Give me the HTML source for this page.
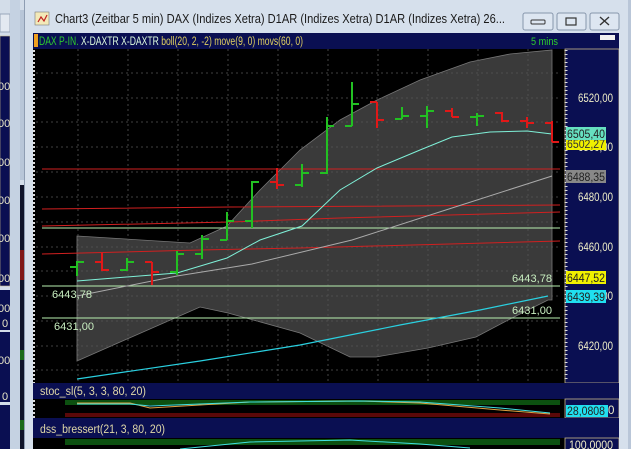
<!DOCTYPE html>
<html><head><meta charset="utf-8"><style>
body{margin:0;width:631px;height:449px;overflow:hidden;background:#d3dde9;font-family:"Liberation Sans",sans-serif}
svg{display:block}
text{font-family:"Liberation Sans",sans-serif}
</style></head><body>
<svg width="631" height="449" viewBox="0 0 631 449" xmlns="http://www.w3.org/2000/svg">
<rect x="0" y="0" width="631" height="449" fill="#d3dde9"/>
<!-- left window -->
<rect x="0" y="14" width="10" height="18" fill="#e3e9f1" stroke="#9aa8ba"/>
<rect x="0" y="36" width="10" height="250" fill="#0a0f52" stroke="#c9b98a" stroke-width="0.6"/>
<rect x="0" y="290" width="10" height="40" fill="#0a0f52"/>
<rect x="0" y="332" width="10" height="70" fill="#0a0f52"/>
<rect x="0" y="405" width="10" height="44" fill="#0a0f52"/>
<g fill="#e8e6c8" font-size="11">
<text x="-2" y="90">00</text><text x="-2" y="127">00</text><text x="-2" y="166">00</text><text x="-2" y="204">00</text><text x="-2" y="242">00</text><text x="-2" y="282">00</text><text x="-2" y="312">00</text><text x="2" y="327">0</text><text x="-2" y="364">00</text><text x="2" y="400">0</text>
</g>
<rect x="10" y="0" width="10" height="449" fill="#c5d2e2"/>
<rect x="20" y="185" width="4" height="264" fill="#10142a"/>
<rect x="20" y="250" width="4" height="30" fill="#801818"/>
<rect x="20" y="350" width="4" height="10" fill="#1a6a1a"/>
<rect x="20" y="420" width="4" height="10" fill="#1a6a1a"/>
<rect x="20" y="10" width="4" height="170" fill="#b8c6d8"/>
<!-- main window frame -->
<rect x="24" y="0" width="607" height="449" fill="#d6e0ec"/>
<rect x="24" y="0" width="1" height="449" fill="#8e9db2"/>
<text x="55" y="23" font-size="12.5" fill="#1a1a1a" textLength="450" lengthAdjust="spacingAndGlyphs">Chart3 (Zeitbar 5 min)  DAX (Indizes Xetra) D1AR (Indizes Xetra) D1AR (Indizes Xetra) 26...</text>
<rect x="35" y="12" width="14" height="13" fill="#f3e9b8" stroke="#7a7a7a" stroke-width="0.6"/>
<path d="M38 22 l3 -5 l3 4 l3 -6" stroke="#c02020" fill="none" stroke-width="1.2"/>
<g fill="#dde6f1" stroke="#8797ac">
<rect x="523" y="13" width="30" height="17" rx="2"/><rect x="557" y="13" width="29" height="17" rx="2"/><rect x="590" y="13" width="29" height="17" rx="2"/>
</g>
<rect x="531" y="20" width="14" height="4" fill="none" stroke="#333" rx="1"/>
<rect x="566" y="18" width="10" height="7" fill="none" stroke="#333" stroke-width="1.2"/>
<path d="M600 17 l9 8 M609 17 l-9 8" stroke="#333" stroke-width="1.4"/>
<!-- header bar -->
<rect x="33" y="33" width="586" height="16" fill="#0a0f52"/>
<rect x="34" y="34" width="4" height="13" fill="#f0a020"/>
<text x="39" y="45" font-size="11.5" textLength="264" lengthAdjust="spacingAndGlyphs"><tspan fill="#2ecc2e">DAX P-IN.</tspan><tspan fill="#e0ffe0"> X-DAXTR X-DAXTR</tspan><tspan fill="#e0d060"> boll(20, 2, -2) move(9, 0) movs(60, 0)</tspan></text>
<text x="531" y="45" font-size="11" fill="#2ecc2e" textLength="27" lengthAdjust="spacingAndGlyphs">5 mins</text>
<rect x="600" y="35" width="15" height="5" fill="#f0f0f0"/>
<!-- chart area -->
<rect x="33" y="49" width="532" height="334" fill="#000"/>
<path d="M77 236 L190 243 L227 226 L260 190 L300 150 L340 120 L377 100 L420 80 L470 62 L510 54 L552 50 L552 300 L548 300 L512 318 L476 337 L428 348 L376 357 L350 357 L300 333 L228 313 L200 307 L77 361 Z" fill="#3a3a3a" stroke="#777" stroke-width="0.8"/>
<g stroke="#555" stroke-dasharray="2,3" stroke-width="0.8">
<line x1="78" y1="49" x2="78" y2="383"/><line x1="128" y1="49" x2="128" y2="383"/><line x1="178" y1="49" x2="178" y2="383"/><line x1="228" y1="49" x2="228" y2="383"/><line x1="278" y1="49" x2="278" y2="383"/><line x1="328" y1="49" x2="328" y2="383"/><line x1="378" y1="49" x2="378" y2="383"/><line x1="428" y1="49" x2="428" y2="383"/><line x1="478" y1="49" x2="478" y2="383"/><line x1="528" y1="49" x2="528" y2="383"/>
<line x1="36" y1="73" x2="560" y2="73"/><line x1="36" y1="98" x2="560" y2="98"/><line x1="36" y1="122" x2="560" y2="122"/><line x1="36" y1="147" x2="560" y2="147"/><line x1="36" y1="172" x2="560" y2="172"/><line x1="36" y1="197" x2="560" y2="197"/><line x1="36" y1="222" x2="560" y2="222"/><line x1="36" y1="247" x2="560" y2="247"/><line x1="36" y1="271" x2="560" y2="271"/><line x1="36" y1="296" x2="560" y2="296"/><line x1="36" y1="321" x2="560" y2="321"/><line x1="36" y1="346" x2="560" y2="346"/><line x1="36" y1="370" x2="560" y2="370"/>
</g>
<line x1="34" y1="50" x2="34" y2="383" stroke="#ddd" stroke-dasharray="2,2" stroke-width="2"/>
<g stroke="#d02020" stroke-width="1" fill="none">
<line x1="42" y1="169" x2="560" y2="169"/>
<polyline points="42,209 230,207 560,205"/>
<polyline points="42,226 230,222 340,218 560,212"/>
<polyline points="42,254 200,250 300,248 560,241"/>
</g>
<g stroke="#b8f0b0" stroke-width="1">
<line x1="42" y1="228" x2="560" y2="228"/>
<line x1="42" y1="286" x2="560" y2="286"/>
<line x1="42" y1="318" x2="560" y2="318"/>
</g>
<polyline points="77,281 177,273 227,258 260,240 302,226 340,190 377,168 420,150 452,137 490,132 527,131 552,134" fill="none" stroke="#7ff0d8" stroke-width="1"/>
<polyline points="77,296 177,276 252,264 352,240 452,208 552,176" fill="none" stroke="#aaa" stroke-width="1"/>
<polyline points="77,379 200,361 300,345 400,325 480,310 548,296" fill="none" stroke="#2ad0e0" stroke-width="1.2"/>
<g stroke-width="2" fill="none">
<path stroke="#22c022" d="M77 261V276M70 267H77M77 262H84"/>
<path stroke="#e01818" d="M102 253V271M95 262H102M102 270H109"/>
<path stroke="#22c022" d="M127 258V271M120 270H127M127 262H134"/>
<path stroke="#e01818" d="M152 262V285M145 262H152M152 272H159"/>
<path stroke="#22c022" d="M177 251V275M170 272H177M177 254H184"/>
<path stroke="#22c022" d="M202 235V259M195 254H202M202 239H209"/>
<path stroke="#22c022" d="M227 212V240M220 240H227M227 221H234"/>
<path stroke="#22c022" d="M252 181V228M245 221H252M252 182H259"/>
<path stroke="#e01818" d="M277 168V189M270 182H277M277 185H284"/>
<path stroke="#22c022" d="M302 164V187M295 185H302M302 173H309"/>
<path stroke="#22c022" d="M327 117V174M320 173H327M327 126H334"/>
<path stroke="#22c022" d="M352 82V126M345 126H352M352 104H359"/>
<path stroke="#e01818" d="M377 102V128M370 102H377M377 120H384"/>
<path stroke="#22c022" d="M402 107V119M395 119H402M402 116H409"/>
<path stroke="#22c022" d="M427 106V128M420 116H427M427 111H434"/>
<path stroke="#e01818" d="M452 108V117M445 111H452M452 117H459"/>
<path stroke="#22c022" d="M477 113V126M470 117H477M477 116H484"/>
<path stroke="#e01818" d="M502 112V122M495 113H502M502 121H509"/>
<path stroke="#e01818" d="M527 117V128M520 121H527M527 123H534"/>
<path stroke="#e01818" d="M552 121V142M545 123H552M552 142H559"/>
</g>
<g font-size="11" fill="#c8eec0">
<text x="52" y="298" textLength="40" lengthAdjust="spacingAndGlyphs">6443,78</text><text x="512" y="282" textLength="40" lengthAdjust="spacingAndGlyphs">6443,78</text>
<text x="54" y="330" textLength="40" lengthAdjust="spacingAndGlyphs">6431,00</text><text x="512" y="314" textLength="40" lengthAdjust="spacingAndGlyphs">6431,00</text>
</g>
<!-- right axis -->
<rect x="565" y="49" width="54" height="334" fill="#0a0f52" stroke="#c9b98a" stroke-width="0.8"/>
<line x1="566" y1="50" x2="566" y2="382" stroke="#ddd" stroke-dasharray="1,3" stroke-width="3"/>
<g font-size="11.5" fill="#f0eec8">
<text x="578" y="102" textLength="35" lengthAdjust="spacingAndGlyphs">6520,00</text><text x="578" y="151" textLength="35" lengthAdjust="spacingAndGlyphs">6500,00</text><text x="578" y="201" textLength="35" lengthAdjust="spacingAndGlyphs">6480,00</text><text x="578" y="251" textLength="35" lengthAdjust="spacingAndGlyphs">6460,00</text><text x="578" y="300" textLength="35" lengthAdjust="spacingAndGlyphs">6440,00</text><text x="578" y="350" textLength="35" lengthAdjust="spacingAndGlyphs">6420,00</text>
</g>
<g font-size="11.5">
<rect x="566" y="138" width="40" height="12" fill="#f0f000"/><text x="567" y="148" fill="#333" textLength="38" lengthAdjust="spacingAndGlyphs">6502,27</text>
<rect x="566" y="127" width="40" height="13" fill="#66e0c0"/><text x="567" y="138" fill="#222" textLength="38" lengthAdjust="spacingAndGlyphs">6505,40</text>
<rect x="566" y="170" width="40" height="13" fill="#888"/><text x="567" y="181" fill="#222" textLength="38" lengthAdjust="spacingAndGlyphs">6488,35</text>
<rect x="566" y="271" width="40" height="13" fill="#f0f000"/><text x="567" y="282" fill="#222" textLength="38" lengthAdjust="spacingAndGlyphs">6447,52</text>
<rect x="566" y="290" width="40" height="13" fill="#20e0f0"/><text x="567" y="301" fill="#222" textLength="38" lengthAdjust="spacingAndGlyphs">6439,39</text>
</g>
<!-- stoc panel -->
<rect x="33" y="383" width="586" height="16" fill="#0a0f52"/>
<text x="40" y="395" font-size="11.5" fill="#e0d8a8" textLength="106" lengthAdjust="spacingAndGlyphs">stoc_sl(5, 3, 3, 80, 20)</text>
<rect x="33" y="399" width="532" height="19" fill="#000"/>
<rect x="65" y="400" width="495" height="5" fill="#0c5010"/>
<rect x="65" y="413" width="495" height="4" fill="#5a0808"/>
<polyline points="77,403 130,403 150,408 200,405 250,402 360,401 420,403 500,410 550,414" fill="none" stroke="#e0a040" stroke-width="1"/>
<polyline points="77,404 130,404 150,406 200,404 250,402 360,401 420,402 500,408 550,413" fill="none" stroke="#40e0e0" stroke-width="1"/>
<line x1="34" y1="400" x2="34" y2="418" stroke="#ddd" stroke-dasharray="2,2" stroke-width="2"/>
<rect x="565" y="399" width="54" height="19" fill="#0a0f52" stroke="#c9b98a" stroke-width="0.8"/>
<rect x="566" y="405" width="42" height="12" fill="#20e0f0"/>
<text x="567" y="415" font-size="11.5" fill="#222" textLength="38" lengthAdjust="spacingAndGlyphs">28,0808</text>
<text x="608" y="414" font-size="11.5" fill="#f0eec8">0</text>
<!-- dss panel -->
<rect x="33" y="418" width="586" height="20" fill="#0a0f52"/>
<text x="40" y="433" font-size="11.5" fill="#e0d8a8" textLength="125" lengthAdjust="spacingAndGlyphs">dss_bressert(21, 3, 80, 20)</text>
<rect x="33" y="438" width="532" height="11" fill="#000"/>
<rect x="65" y="439" width="495" height="6" fill="#0c5010"/>
<polyline points="180,449 250,442 350,440 420,444 470,448" fill="none" stroke="#40e0e0" stroke-width="1"/>
<rect x="565" y="438" width="54" height="12" fill="#0a0f52" stroke="#c9b98a" stroke-width="0.8"/>
<text x="569" y="449" font-size="11.5" fill="#f0eec8" textLength="44" lengthAdjust="spacingAndGlyphs">100,0000</text>
<rect x="619" y="33" width="12" height="416" fill="#d6e0ec"/>
<rect x="628" y="0" width="3" height="449" fill="#b9c6d8"/>
</svg>
</body></html>
